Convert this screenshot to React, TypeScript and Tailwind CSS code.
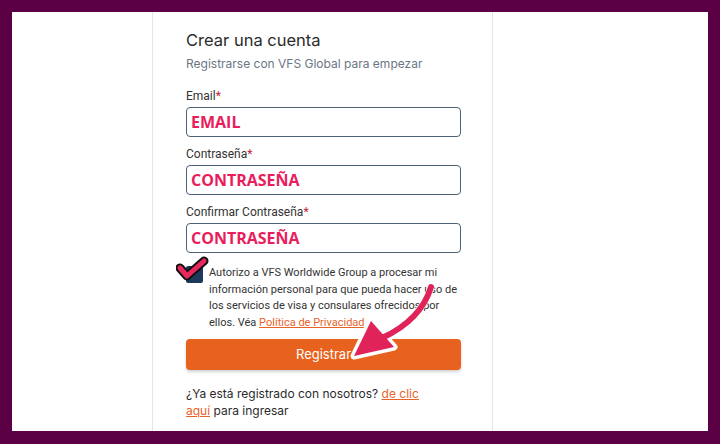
import React from "react";

const inter = { fontFamily: "Inter, 'Liberation Sans', sans-serif" };

const Field = ({ label, value }: { label: string; value: string }) => (
  <div>
    <label className="block text-[12px] leading-4 text-[#333] font-['Roboto',Arial,sans-serif]">
      {label}
      <span className="text-[#c0213a]">*</span>
    </label>
    <div className="mt-[3px] flex h-[30px] w-[275px] items-center rounded-[4px] border border-[#4d6279] px-[4px]">
      <span className="text-[16px] font-bold text-[#e91d5c] font-['Open_Sans',sans-serif]">
        {value}
      </span>
    </div>
  </div>
);

const App = () => {
  return (
    <div className="h-[444px] w-[720px] bg-[#5c0045] pt-[12px] pl-[12px] pr-[12px] pb-[13px]">
      <div className="relative flex h-full w-full bg-white">
        <div className="w-[140px]" />

        {/* Registration card */}
        <div className="w-[341px] border-x border-[#e3e5e8] pl-[33px] pt-[16px]" style={inter}>
          <h1 className="text-[16.5px] leading-6 text-[#2b2b2b]">Crear una cuenta</h1>
          <p className="mt-[3px] text-[12px] leading-[18px] text-[#6b7685]">
            Registrarse con VFS Global para empezar
          </p>

          <div className="mt-[15px]">
            <Field label="Email" value="EMAIL" />
          </div>
          <div className="mt-[9px]">
            <Field label="Contraseña" value="CONTRASEÑA" />
          </div>
          <div className="mt-[9px]">
            <Field label="Confirmar Contraseña" value="CONTRASEÑA" />
          </div>

          {/* Consent checkbox */}
          <div className="relative mt-[11px] flex">
            <div className="mt-[2px] h-[17px] w-[17px] shrink-0 rounded-[2px] bg-[#1d3a5c]" />
            <svg
              className="absolute left-[-10px] top-[-8px]"
              width="34"
              height="30"
              viewBox="0 0 34 30"
            >
              <polyline
                points="4,12 11,20 28,5"
                fill="none"
                stroke="#111"
                strokeWidth="9"
                strokeLinecap="round"
                strokeLinejoin="round"
              />
              <polyline
                points="4,12 11,20 28,5"
                fill="none"
                stroke="#e8275c"
                strokeWidth="5"
                strokeLinecap="round"
                strokeLinejoin="round"
              />
            </svg>
            <p className="ml-[6px] mt-[1px] w-[250px] text-[11px] leading-[16.6px] text-[#333] font-['Roboto',Arial,sans-serif]">
              Autorizo a VFS Worldwide Group a procesar mi información personal para que
              pueda hacer uso de los servicios de visa y consulares ofrecidos por ellos. Véa{" "}
              <a href="#" className="text-[#e8632a] underline">
                Política de Privacidad
              </a>
            </p>
          </div>

          <button className="mt-[8px] h-[31px] w-[275px] rounded-[4px] bg-[#e8621f] text-[13px] text-white shadow-[0_2px_3px_rgba(0,0,0,0.18)]">
            Registrar
          </button>

          <p className="mt-[15px] w-[245px] text-[12px] leading-[17px] text-[#2b2b2b]">
            ¿Ya está registrado con nosotros?{" "}
            <a href="#" className="text-[#e8632a] underline">
              de clic aquí
            </a>{" "}
            para ingresar
          </p>
        </div>

        <div className="flex-1" />

        {/* Annotation arrow */}
        <svg
          className="absolute left-0 top-0"
          width="696"
          height="419"
          viewBox="12 12 696 419"
          style={{ pointerEvents: "none" }}
        >
          <g stroke="#fff" strokeWidth="7" strokeLinejoin="round" strokeLinecap="round" fill="#fff">
            <path d="M431,287 Q421,320 382,338" fill="none" />
            <polygon points="354,356 371,321 394,347" />
          </g>
          <path
            d="M431,287 Q421,320 382,338"
            fill="none"
            stroke="#e0245a"
            strokeWidth="6"
            strokeLinecap="round"
          />
          <polygon points="354,356 371,321 394,347" fill="#e0245a" />
        </svg>
      </div>
    </div>
  );
};

export default App;
